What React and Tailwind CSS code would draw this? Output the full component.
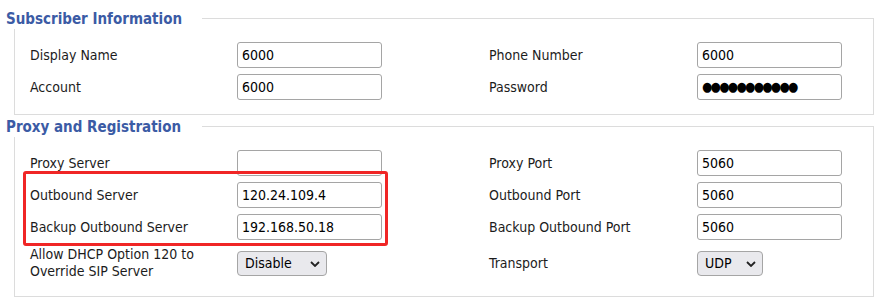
import React from 'react';

const font = { fontFamily: '"DejaVu Sans Condensed", "DejaVu Sans", sans-serif' };

function TextBox({ value, password }) {
  return (
    <div className="flex h-[26px] w-[145px] items-center rounded-[3px] border border-[#a5a5a5] bg-white px-[4px] text-[14px] text-black">
      {password ? <span className="text-[13px] tracking-[-1.6px]">{'●'.repeat(11)}</span> : value}
    </div>
  );
}

function Dropdown({ value, width }) {
  return (
    <div className={`flex h-[25px] items-center justify-between rounded-[4px] border border-[#a5a5a5] bg-[#e9e9ed] pl-[7px] pr-[6px] text-[14px] text-black ${width}`}>
      <span>{value}</span>
      <svg width="10" height="6" viewBox="0 0 10 6" className="mt-[1px]">
        <path d="M1 1l4 4 4-4" fill="none" stroke="#222" strokeWidth="1.8" />
      </svg>
    </div>
  );
}

function Label({ children }) {
  return <div className="flex items-center text-[14px] leading-[17px] text-[#1c1c1c]">{children}</div>;
}

function Section({ title, className, children }) {
  return (
    <div className={`relative ml-[14px] w-[860px] border border-[#dcdcdc] ${className}`}>
      <div className="absolute left-[-14px] top-[-10px] h-[20px] w-[201px] bg-white pl-[5px] text-[15px] font-bold leading-[20px] text-[#3b5ba5]">
        {title}
      </div>
      {children}
    </div>
  );
}

export default function App() {
  return (
    <div className="h-[303px] w-[878px] overflow-hidden bg-white" style={font}>
      <Section title="Subscriber Information" className="mt-[18px] pb-[14px] pt-[23px]">
        <div className="grid grid-cols-[207px_145px_107px_208px_145px] gap-y-[6px] pl-[15px]">
          <Label>Display Name</Label>
          <TextBox value="6000" />
          <div />
          <Label>Phone Number</Label>
          <TextBox value="6000" />

          <Label>Account</Label>
          <TextBox value="6000" />
          <div />
          <Label>Password</Label>
          <TextBox password />
        </div>
      </Section>

      <Section title="Proxy and Registration" className="mt-[11px] pb-[16px] pt-[23px]">
        <div className="grid grid-cols-[207px_145px_107px_208px_145px] gap-y-[6px] pl-[15px]">
          <Label>Proxy Server</Label>
          <TextBox value="" />
          <div />
          <Label>Proxy Port</Label>
          <TextBox value="5060" />

          <Label>Outbound Server</Label>
          <TextBox value="120.24.109.4" />
          <div />
          <Label>Outbound Port</Label>
          <TextBox value="5060" />

          <Label>Backup Outbound Server</Label>
          <TextBox value="192.168.50.18" />
          <div />
          <Label>Backup Outbound Port</Label>
          <TextBox value="5060" />

          <Label>
            Allow DHCP Option 120 to
            <br />
            Override SIP Server
          </Label>
          <div className="flex items-center">
            <Dropdown value="Disable" width="w-[90px]" />
          </div>
          <div />
          <Label>Transport</Label>
          <div className="flex items-center">
            <Dropdown value="UDP" width="w-[66px]" />
          </div>
        </div>
        <div className="absolute left-[8px] top-[44px] h-[75px] w-[365px] rounded-[3px] border-[3px] border-[#f02626]" />
      </Section>
    </div>
  );
}
